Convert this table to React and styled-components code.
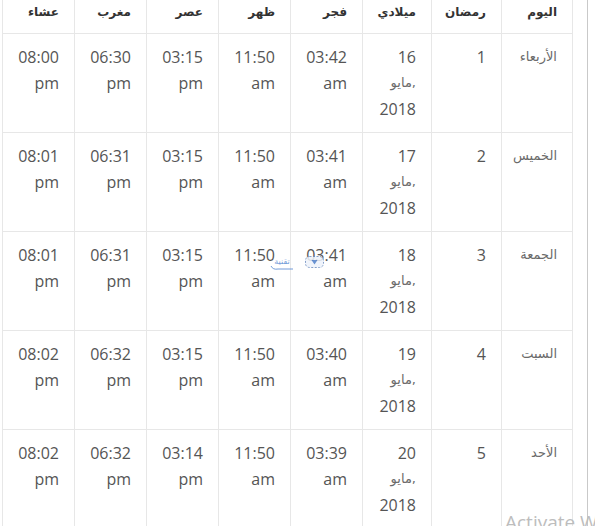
import React from 'react';
import styled, { createGlobalStyle } from 'styled-components';

const Global = createGlobalStyle`
  html, body { margin: 0; padding: 0; background: #fff; }
  body { font-family: "Open Sans", "DejaVu Sans", sans-serif; overflow: hidden; }
`;

const Page = styled.div`
  position: relative;
  width: 595px;
  height: 526px;
  overflow: hidden;
`;

const Frame = styled.div`
  box-sizing: border-box;
  width: 588px;
  height: 100%;
  padding-left: 2px;
  border-right: 1px solid #c9c9c9;
`;

const Table = styled.div`
  direction: rtl;
  display: grid;
  grid-template-columns: 71px 70px 69px repeat(5, 72px);
  box-sizing: border-box;
  width: 571px;
  border-right: 1px solid #e7e7e7;
`;

const HeadCell = styled.div`
  box-sizing: border-box;
  height: 34px;
  padding: 0 15px 0;
  border-left: 1px solid #e7e7e7;
  border-bottom: 1px solid #e7e7e7;
  font-family: "DejaVu Sans", sans-serif;
  font-weight: bold;
  font-size: 12px;
  line-height: 24px;
  color: #333;
  text-align: right;
  white-space: nowrap;
`;

const Cell = styled.div`
  box-sizing: border-box;
  height: 99px;
  padding: 10px 15px;
  border-left: 1px solid #e7e7e7;
  border-bottom: 1px solid #e7e7e7;
  font-size: 16px;
  line-height: 26px;
  color: #555;
  text-align: right;
`;

const Line = styled.div`
  white-space: nowrap;
  direction: ${p => (p.$ltr ? 'ltr' : 'rtl')};
  text-align: right;
  font-family: ${p => (p.$arabic ? '"DejaVu Sans", sans-serif' : '"Open Sans", sans-serif')};
  font-size: ${p => (p.$arabic ? '13px' : '16px')};
  color: ${p => (p.$arabic ? '#6a6a6a' : '#555')};
`;

const Activate = styled.div`
  position: absolute;
  left: 505px;
  top: 509px;
  font-family: "Open Sans", sans-serif;
  font-size: 19px;
  color: #bdbdbd;
  white-space: nowrap;
`;

const Watermark = styled.div`
  position: absolute;
  left: 271px;
  top: 256px;
  display: flex;
  align-items: center;
  gap: 12px;
  opacity: 0.85;
  pointer-events: none;
`;

const MarkText = styled.span`
  position: relative;
  display: inline-block;
  width: 22px;
  text-align: center;
  font-family: "DejaVu Sans", sans-serif;
  font-size: 8px;
  line-height: 12px;
  color: #5b8bd3;
  direction: rtl;
`;

const Swoosh = styled.svg`
  position: absolute;
  left: -1px;
  bottom: -3px;
`;

const headers = ['اليوم', 'رمضان', 'ميلادي', 'فجر', 'ظهر', 'عصر', 'مغرب', 'عشاء'];

const rows = [
  { day: 'الأربعاء', r: 1, d: 16, t: [['03:42', 'am'], ['11:50', 'am'], ['03:15', 'pm'], ['06:30', 'pm'], ['08:00', 'pm']] },
  { day: 'الخميس', r: 2, d: 17, t: [['03:41', 'am'], ['11:50', 'am'], ['03:15', 'pm'], ['06:31', 'pm'], ['08:01', 'pm']] },
  { day: 'الجمعة', r: 3, d: 18, t: [['03:41', 'am'], ['11:50', 'am'], ['03:15', 'pm'], ['06:31', 'pm'], ['08:01', 'pm']] },
  { day: 'السبت', r: 4, d: 19, t: [['03:40', 'am'], ['11:50', 'am'], ['03:15', 'pm'], ['06:32', 'pm'], ['08:02', 'pm']] },
  { day: 'الأحد', r: 5, d: 20, t: [['03:39', 'am'], ['11:50', 'am'], ['03:14', 'pm'], ['06:32', 'pm'], ['08:02', 'pm']] },
];

export default function App() {
  return (
    <Page>
      <Global />
      <Frame>
        <Table role="table">
          {headers.map(h => (
            <HeadCell key={h} role="columnheader">{h}</HeadCell>
          ))}
          {rows.map(row => (
            <React.Fragment key={row.r}>
              <Cell role="cell">
                <Line $arabic>{row.day}</Line>
              </Cell>
              <Cell role="cell">
                <Line>{row.r}</Line>
              </Cell>
              <Cell role="cell">
                <Line>{row.d}</Line>
                <Line $arabic $ltr>{'مايو,'}</Line>
                <Line>2018</Line>
              </Cell>
              {row.t.map(([time, ap], i) => (
                <Cell role="cell" key={i}>
                  <Line>{time}</Line>
                  <Line>{ap}</Line>
                </Cell>
              ))}
            </React.Fragment>
          ))}
        </Table>
      </Frame>
      <Watermark>
        <MarkText>
          تقنية
          <Swoosh width="24" height="6" viewBox="0 0 24 6">
            <path d="M1 1 Q 3 5 8 4 L 23 4" stroke="#5b8bd3" strokeWidth="1" fill="none" />
          </Swoosh>
        </MarkText>
        <svg width="19" height="12" viewBox="0 0 19 12">
          <rect x="0.5" y="0.5" width="18" height="11" rx="4" fill="#eef3fb" stroke="#6f8fc0" strokeWidth="1" strokeDasharray="2 1.5" />
          <path d="M6.5 4 L12.5 4 L9.5 8.5 Z" fill="#4f7fc9" />
        </svg>
      </Watermark>
      <Activate>Activate Windows</Activate>
    </Page>
  );
}
